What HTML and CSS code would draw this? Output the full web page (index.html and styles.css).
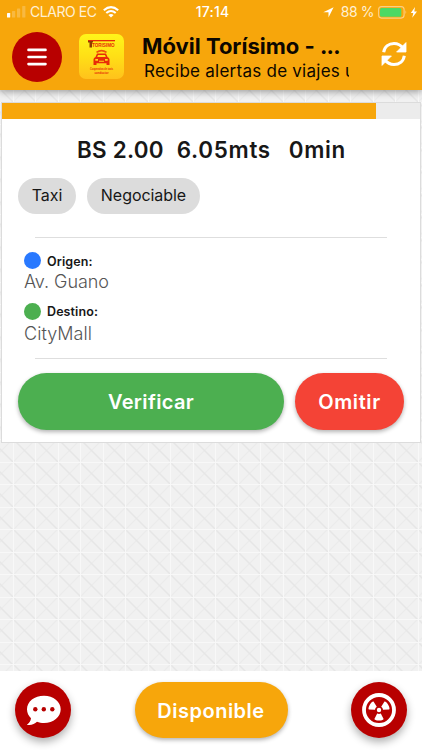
FILE: index.html
```html
<!DOCTYPE html>
<html lang="es">
<head>
<meta charset="utf-8">
<title>Móvil Torísimo</title>
<link rel="stylesheet" href="styles.css">
</head>
<body>
<div class="app">
  <header class="header">
    <div class="status">
      <div class="status-left">
        <svg class="signal" width="19" height="12" viewBox="0 0 19 12" fill="#fff"><rect x="0" y="7" width="3.2" height="4.5" rx=".6"/><g opacity=".22"><rect x="5" y="5" width="3.2" height="6.5" rx=".6"/><rect x="10" y="2.5" width="3.2" height="9" rx=".6"/><rect x="15.2" y="0" width="3.2" height="11.5" rx=".6"/></g></svg>
        <span class="carrier">CLARO EC</span>
        <svg class="wifi" width="16" height="12" viewBox="0 0 16 12" fill="none" stroke="#fff" stroke-width="2.1"><path d="M.8 4.2Q8-2 15.2 4.2M3.3 7Q8 3 12.7 7"/><path d="M8 11.6 5.4 9Q8 6.900 10.600 9Z" fill="#fff" stroke="none"/></svg>
      </div>
      <span class="clock">17:14</span>
      <div class="status-right">
        <svg width="11" height="11" viewBox="0 0 11 11"><path d="M10.600.3.3 5.300H5.500V10.600Z" fill="#fff"/></svg>
        <span class="percent">88 %</span>
        <svg class="battery" width="40" height="13" viewBox="0 0 40 13"><rect x=".6" y=".6" width="25.500" height="11.500" rx="3" fill="none" stroke="#fcd083" stroke-width="1.100"/><rect x="2" y="2" width="21.300" height="8.700" rx="1.500" fill="#4cd964"/><path d="M27.500 4.300q1.800 2 0 4z" fill="#fcd083"/><path d="M37 1 32.800 7H35.300L34.200 11.800 39 5.600H36.300Z" fill="#fff"/></svg>
      </div>
    </div>
    <div class="toolbar">
      <button class="round menu" aria-label="Menú"><svg width="20" height="18" viewBox="0 0 20 18" stroke="#fff" stroke-width="2.600" stroke-linecap="round"><path d="M1.500 1.900H18.500M1.500 9H18.500M1.500 16.100H18.500"/></svg></button>
      <div class="logo">
        <svg width="45" height="45" viewBox="0 0 45 45" fill="#e82b08">
          <path d="M9 6H36V7.300H9Z"/>
          <path d="M9 7H14V8.500H13V13.500H10.500V8.500H9Z" fill="#8f3b00"/>
          <text class="brand" x="13" y="13.400" textLength="22.500" lengthAdjust="spacingAndGlyphs">TORISIMO</text>
          <path d="M17 17.700Q22.500 14 28 17.700L27 19Q22.500 16 18 19Z" opacity=".8"/>
          <path fill-rule="evenodd" d="M18 19.500H27L28.500 23Q30.500 23.500 30.500 25.500V31H27.500V29.200H17.500V31H14.500V25.500Q14.500 23.500 16.500 23ZM19 21 18.200 23H26.800L26 21ZM16.300 25V26.800H19V25ZM26 25V26.800H28.700V25ZM20 26.800V27.700H25V26.800Z"/>
          <text class="brand-small" x="11" y="35.500" textLength="23" lengthAdjust="spacingAndGlyphs">Cooperativa de taxis</text>
          <text class="brand-small" x="15.500" y="40" textLength="14" lengthAdjust="spacingAndGlyphs">conductor</text>
        </svg>
      </div>
      <div class="heading">
        <div class="title">Móvil Torísimo - <span class="dots">...</span></div>
        <div class="subtitle">Recibe alertas de viajes u</div>
      </div>
      <svg class="refresh" width="26" height="26" viewBox="0 0 26 26" fill="none" stroke="#fff" stroke-width="3"><path d="M2.700 11.300C3.500 5.500 8 2.500 13 2.500C17 2.500 20 4.300 22.500 7.500M23.300 14.700C22.500 20.500 18 23.500 13 23.500C9 23.500 6 21.700 3.500 18.500"/><path d="M25 1.600V11H15.600ZM1 24.400V15H10.400Z" fill="#fff" stroke="#fff" stroke-width=".8" stroke-linejoin="round"/></svg>
    </div>
  </header>

  <main class="content">
    <section class="card">
      <div class="progress"><div class="progress-fill"></div></div>
      <h1 class="trip"><span>BS 2.00</span><span>6.05mts</span><span>0min</span></h1>
      <div class="chips"><span class="chip taxi">Taxi</span><span class="chip negotiable">Negociable</span></div>
      <div class="places">
        <div class="place"><div class="place-label"><i class="dot blue"></i><b>Origen:</b></div><div class="place-name origin">Av. Guano</div></div>
        <div class="place"><div class="place-label dest"><i class="dot green"></i><b>Destino:</b></div><div class="place-name target">CityMall</div></div>
      </div>
      <div class="actions"><button class="pill verify">Verificar</button><button class="pill skip">Omitir</button></div>
    </section>
  </main>

  <footer class="footer">
    <button class="round big" aria-label="Mensajes"><svg width="35" height="31" viewBox="0 0 35 31"><path d="M18 .7C8.500.7 1 6.500 1 14.200C1 17.700 2.500 20.800 5 23.200C4.800 26 3 28 .8 29.700C5 30.500 8.500 29.200 11 26.800C13 27.600 15.500 28 18 28C27.400 28 34.700 22 34.700 14.300S27.400.7 18 .7Z" fill="#fff"/><g fill="#b80000"><circle cx="9.300" cy="14.300" r="2.200"/><circle cx="17.800" cy="14.300" r="2.200"/><circle cx="26.300" cy="14.300" r="2.200"/></g></svg></button>
    <button class="pill available">Disponible</button>
    <button class="round big" aria-label="Alerta"><svg width="34" height="34" viewBox="-17 -17 34 34"><circle r="15" fill="none" stroke="#fff" stroke-width="3.800"/><g fill="#fff"><circle r="2.200"/><path id="blade" d="M-1.800 3.600Q0 4.500 1.800 3.600L4.600 9Q4.600 10.400 0 10.600Q-4.600 10.400-4.600 9Z"/><use href="#blade" transform="rotate(120)"/><use href="#blade" transform="rotate(240)"/></g></svg></button>
  </footer>
</div>
</body>
</html>
```
FILE: styles.css
```css
* { box-sizing: border-box; }
body { margin: 0; font-family: Inter, "Liberation Sans", sans-serif; color: #171717; }
button { border: 0; padding: 0; font-family: inherit; }
svg { display: block; flex: none; }
.app { width: 422px; height: 750px; display: flex; flex-direction: column; overflow: hidden; }

.header { height: 90px; flex: none; background: #f7a60b; box-shadow: 0 2px 7px rgba(0,0,0,.35); position: relative; z-index: 1; }
.status { height: 24px; display: grid; grid-template-columns: 1fr auto 1fr; align-items: center; padding: 0 4px 0 7px; color: #fff; font-size: 14px; line-height: 24px; }
.status-left, .status-right { display: flex; align-items: center; }
.status-right { justify-content: flex-end; }
.carrier { margin: 0 6px 0 4px; letter-spacing: -.45px; width: 67px; white-space: nowrap; color: #fff0d5; }
.clock { font-weight: 500; letter-spacing: .2px; }
.percent { margin: 0 4px 0 7px; letter-spacing: -.45px; white-space: nowrap; color: #fff0d5; }
.toolbar { height: 66px; display: flex; align-items: flex-start; padding-left: 12px; }
.round { width: 50px; height: 50px; border-radius: 50%; background: #b80000; display: flex; align-items: center; justify-content: center; flex: none; }
.menu { margin-top: 8px; }
.logo { width: 45px; height: 45px; margin: 10px 0 0 17px; border-radius: 7px; background: linear-gradient(#fff51a, #ffdf16 50%, #ffc21c); }
.brand { font: 700 6px "Liberation Sans", sans-serif; }
.brand-small { font: 700 3px "Liberation Sans", sans-serif; }
.heading { width: 208px; margin: 8px 0 0 18px; color: #0c0700; white-space: nowrap; }
.title { font-size: 22px; line-height: 28px; font-weight: 700; letter-spacing: 0; }
.dots { letter-spacing: -.8px; }
.subtitle { margin-left: 2px; font-size: 17px; line-height: 22px; letter-spacing: .25px; overflow: hidden; width: 205px; }
.refresh { margin: 17px 0 0 31px; }

.content { flex: 1; padding: 12px 1px 0; background: #f1f1f1 url("data:image/svg+xml,%3Csvg xmlns='http://www.w3.org/2000/svg' width='22.5' height='22.5' viewBox='0 0 22.500 22.500'%3E%3Crect width='22.500' height='22.500' fill='%23f1f1f1'/%3E%3Cpath d='M22.500 0L0 22.500' stroke='%23ebebeb' stroke-width='1.200'/%3E%3Cpath d='M0 0L22.500 22.500' stroke='%23e6e6e6' stroke-width='1.400'/%3E%3Cpath d='M0 .5H22.500M.5 0V22.500' stroke='%23f8f8f8' stroke-width='1.200'/%3E%3C/svg%3E") -9.5px 12px / 22.5px 22.5px; }
.card { height: 341px; background: #fff; border: 1px solid #dcdcdc; }
.progress { height: 16px; background: #ececec; }
.progress-fill { width: 374px; height: 100%; background: #f7a60b; }
.trip { margin: 17px 0 0 75px; font-size: 22.4px; line-height: 28px; font-weight: 600; letter-spacing: .25px; display: flex; white-space: nowrap; }
.trip span:nth-child(2) { margin-left: 13px; letter-spacing: .7px; }
.trip span:nth-child(3) { margin-left: 18px; letter-spacing: .65px; }
.chips { margin: 14px 0 0 16px; display: flex; gap: 11px; }
.chip { height: 36px; border-radius: 18px; background: #dcdcdc; font-size: 16px; line-height: 35px; text-align: center; letter-spacing: -.05px; }
.taxi { width: 58px; }
.negotiable { width: 113px; }
.places { height: 122px; margin: 23px 0 0 33px; width: 352px; border: solid #dedede; border-width: 1px 0; padding-top: 14px; }
.place { margin-left: -11px; height: 51px; }
.place-label { height: 17px; display: flex; align-items: center; gap: 6px; font-size: 12.5px; line-height: 17px; letter-spacing: .1px; }
.place-label b { font-weight: 600; padding-top: 2px; }
.dest b { padding-top: 0; margin-top: -1px; }
.dot { width: 17px; height: 17px; border-radius: 50%; }
.blue { background: #2979ff; }
.green { background: #4caf50; }
.place-name { font-size: 18px; line-height: 26px; font-weight: 350; color: #555; letter-spacing: -.05px; }
.target { line-height: 28px; letter-spacing: .05px; }
.actions { display: flex; gap: 11px; margin: 14px 0 0 16px; }
.pill { height: 57px; border-radius: 29px; color: #fff; font-weight: 600; font-size: 20px; line-height: 57px; letter-spacing: .35px; box-shadow: 0 2px 4px rgba(0,0,0,.3); text-align: center; }
.verify { width: 266px; background: #4caf50; }
.skip { width: 109px; background: #f44336; letter-spacing: .6px; }
.verify, .skip { padding-top: 1px; }

.footer { height: 79px; flex: none; background: #fff; display: flex; justify-content: space-between; align-items: flex-start; padding: 11px 15px 0; }
.big { width: 56px; height: 56px; box-shadow: 0 4px 9px rgba(0,0,0,.32); }
.available { width: 153px; height: 56px; line-height: 58px; letter-spacing: .5px; background: #f7a60b; }
```
